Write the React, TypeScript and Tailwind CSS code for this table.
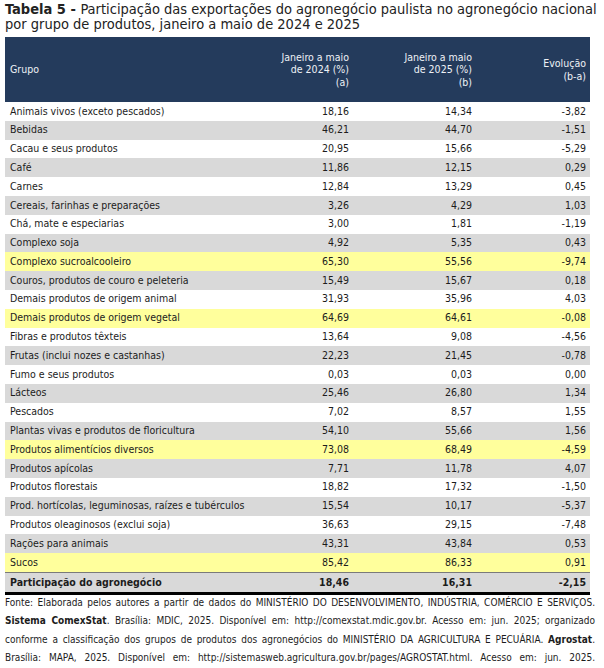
type Row = {
  grupo: string;
  a: string;
  b: string;
  ev: string;
  hl?: boolean;
};

const rows: Row[] = [
  { grupo: "Animais vivos (exceto pescados)", a: "18,16", b: "14,34", ev: "-3,82" },
  { grupo: "Bebidas", a: "46,21", b: "44,70", ev: "-1,51" },
  { grupo: "Cacau e seus produtos", a: "20,95", b: "15,66", ev: "-5,29" },
  { grupo: "Café", a: "11,86", b: "12,15", ev: "0,29" },
  { grupo: "Carnes", a: "12,84", b: "13,29", ev: "0,45" },
  { grupo: "Cereais, farinhas e preparações", a: "3,26", b: "4,29", ev: "1,03" },
  { grupo: "Chá, mate e especiarias", a: "3,00", b: "1,81", ev: "-1,19" },
  { grupo: "Complexo soja", a: "4,92", b: "5,35", ev: "0,43" },
  { grupo: "Complexo sucroalcooleiro", a: "65,30", b: "55,56", ev: "-9,74", hl: true },
  { grupo: "Couros, produtos de couro e peleteria", a: "15,49", b: "15,67", ev: "0,18" },
  { grupo: "Demais produtos de origem animal", a: "31,93", b: "35,96", ev: "4,03" },
  { grupo: "Demais produtos de origem vegetal", a: "64,69", b: "64,61", ev: "-0,08", hl: true },
  { grupo: "Fibras e produtos têxteis", a: "13,64", b: "9,08", ev: "-4,56" },
  { grupo: "Frutas (inclui nozes e castanhas)", a: "22,23", b: "21,45", ev: "-0,78" },
  { grupo: "Fumo e seus produtos", a: "0,03", b: "0,03", ev: "0,00" },
  { grupo: "Lácteos", a: "25,46", b: "26,80", ev: "1,34" },
  { grupo: "Pescados", a: "7,02", b: "8,57", ev: "1,55" },
  { grupo: "Plantas vivas e produtos de floricultura", a: "54,10", b: "55,66", ev: "1,56" },
  { grupo: "Produtos alimentícios diversos", a: "73,08", b: "68,49", ev: "-4,59", hl: true },
  { grupo: "Produtos apícolas", a: "7,71", b: "11,78", ev: "4,07" },
  { grupo: "Produtos florestais", a: "18,82", b: "17,32", ev: "-1,50" },
  { grupo: "Prod. hortícolas, leguminosas, raízes e tubérculos", a: "15,54", b: "10,17", ev: "-5,37" },
  { grupo: "Produtos oleaginosos (exclui soja)", a: "36,63", b: "29,15", ev: "-7,48" },
  { grupo: "Rações para animais", a: "43,31", b: "43,84", ev: "0,53" },
  { grupo: "Sucos", a: "85,42", b: "86,33", ev: "0,91", hl: true },
];

const cols = "grid grid-cols-[248px_100px_123px_114px]";

export default function App() {
  return (
    <div className="w-[604px] h-[668px] bg-white px-[5px] pt-[2px] font-['DejaVu_Sans_Condensed','DejaVu_Sans',sans-serif] text-[#1c1c1c]">
      {/* Title */}
      <h1 className="text-[14.5px] leading-[15px] text-[#222]">
        <span className="font-bold">Tabela 5 - </span>
        Participação das exportações do agronegócio paulista no agronegócio nacional
        <br />
        por grupo de produtos, janeiro a maio de 2024 e 2025
      </h1>

      <div className="mt-[5px] w-[585px] text-[10.5px]">
        {/* Header */}
        <div className={`${cols} h-[65px] bg-[#243b5c] text-[#eef1f6] leading-[12.5px]`}>
          <div className="flex items-center pl-[5px]">Grupo</div>
          <div className="flex items-center justify-end pr-[4px] text-right">
            <span>
              Janeiro a maio
              <br />
              de 2024 (%)
              <br />
              (a)
            </span>
          </div>
          <div className="flex items-center justify-end pr-[4px] text-right">
            <span>
              Janeiro a maio
              <br />
              de 2025 (%)
              <br />
              (b)
            </span>
          </div>
          <div className="flex items-center justify-end pr-[4px] text-right">
            <span>
              Evolução
              <br />
              (b-a)
            </span>
          </div>
        </div>

        {/* Body */}
        {rows.map((r, i) => (
          <div
            key={r.grupo}
            className={`${cols} h-[18.8px] items-center ${
              r.hl ? "bg-[#ffff9c]" : i % 2 === 1 ? "bg-[#d9d9d9]" : "bg-white"
            }`}
          >
            <div className="pl-[5px] whitespace-nowrap">{r.grupo}</div>
            <div className="pr-[4px] text-right">{r.a}</div>
            <div className="pr-[4px] text-right">{r.b}</div>
            <div className="pr-[4px] text-right">{r.ev}</div>
          </div>
        ))}

        {/* Total */}
        <div className={`${cols} h-[19px] items-center bg-[#d9d9d9] font-bold border-t border-[#7a7a7a] border-b-[3px] border-b-black box-content`}>
          <div className="pl-[5px]">Participação do agronegócio</div>
          <div className="pr-[4px] text-right">18,46</div>
          <div className="pr-[4px] text-right">16,31</div>
          <div className="pr-[4px] text-right">-2,15</div>
        </div>
      </div>

      {/* Source */}
      <div className="-mt-[1px] w-[590px] text-[10px] leading-[18.5px] text-[#1c1c1c] [&>div]:text-justify [&>div]:[text-align-last:justify]">
        <div>
          Fonte: Elaborada pelos autores a partir de dados do MINISTÉRIO DO DESENVOLVIMENTO, INDÚSTRIA, COMÉRCIO E SERVIÇOS.
        </div>
        <div>
          <span className="font-bold">Sistema ComexStat</span>. Brasília: MDIC, 2025. Disponível em: http://comexstat.mdic.gov.br. Acesso em: jun. 2025; organizado
        </div>
        <div>
          conforme a classificação dos grupos de produtos dos agronegócios do MINISTÉRIO DA AGRICULTURA E PECUÁRIA. <span className="font-bold">Agrostat</span>.
        </div>
        <div>
          Brasília: MAPA, 2025. Disponível em: http://sistemasweb.agricultura.gov.br/pages/AGROSTAT.html. Acesso em: jun. 2025.
        </div>
      </div>
    </div>
  );
}
